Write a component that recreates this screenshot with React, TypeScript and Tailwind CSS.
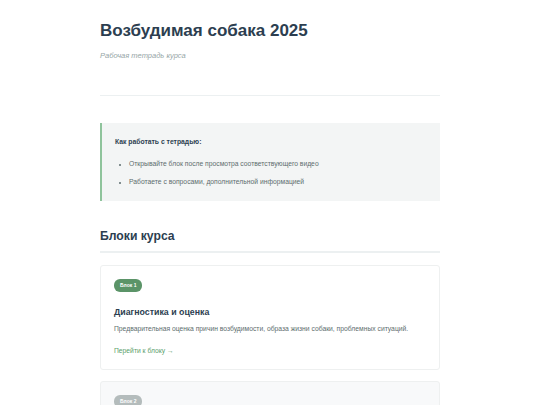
const font = { fontFamily: '"Liberation Sans", Arial, sans-serif' };

const App = () => {
  return (
    <div className="min-h-[405px] bg-white" style={font}>
      <div className="w-[340px] mx-auto pt-[20px]">
        {/* header */}
        <h1 className="text-[17px] leading-[22px] font-bold text-[#2c3e50]">Возбудимая собака 2025</h1>
        <p className="mt-[9px] text-[7.5px] leading-[10px] italic text-[#95a5a6]">Рабочая тетрадь курса</p>
        <div className="mt-[34px] border-t border-[#ecf0f1]"></div>

        {/* how to */}
        <div className="mt-[27px] bg-[#f3f5f5] border-l-2 border-[#8fc49c] pl-[13px] pr-4 pt-[14px] pb-[15px]">
          <p className="text-[6.8px] leading-[9px] font-bold text-[#2c3e50]">Как работать с тетрадью:</p>
          <ul className="mt-[13px] pl-[14px] list-disc marker:text-[5px] text-[6.75px] leading-[9px] text-[#5d6d6e] space-y-[9px]">
            <li>Открывайте блок после просмотра соответствующего видео</li>
            <li>Работаете с вопросами, дополнительной информацией</li>
          </ul>
        </div>

        {/* blocks */}
        <h2 className="mt-[27px] text-[12.2px] leading-[16px] font-bold text-[#2c3e50] pb-[7px] border-b-2 border-[#ecf0f1]">
          Блоки курса
        </h2>

        <div className="mt-[12px] border border-[#eef0f0] rounded-[3px] px-[13px] pt-[13px] pb-[14px]">
          <div className="w-fit bg-[#5b9468] text-white text-[5px] leading-[13px] font-bold px-[6px] rounded-[6px]">Блок 1</div>
          <h3 className="mt-[14px] text-[8.8px] leading-[12px] font-bold text-[#2c3e50]">Диагностика и оценка</h3>
          <p className="mt-[6px] text-[6.75px] leading-[9px] text-[#5d6d6e]">
            Предварительная оценка причин возбудимости, образа жизни собаки, проблемных ситуаций.
          </p>
          <a className="mt-[13px] block text-[6.75px] leading-[9px] text-[#5aa06a]">Перейти к блоку →</a>
        </div>

        <div className="mt-[11px] bg-[#f8f9fa] border border-[#eef0f0] rounded-[3px] px-[13px] pt-[13px] pb-[14px]">
          <div className="w-fit bg-[#b4bcbc] text-white text-[5px] leading-[13px] font-bold px-[6px] rounded-[6px]">Блок 2</div>
          <h3 className="mt-[14px] text-[8.8px] leading-[12px] font-bold text-[#95a5a6]">Следующий блок</h3>
        </div>
      </div>
    </div>
  );
};

export default App;
